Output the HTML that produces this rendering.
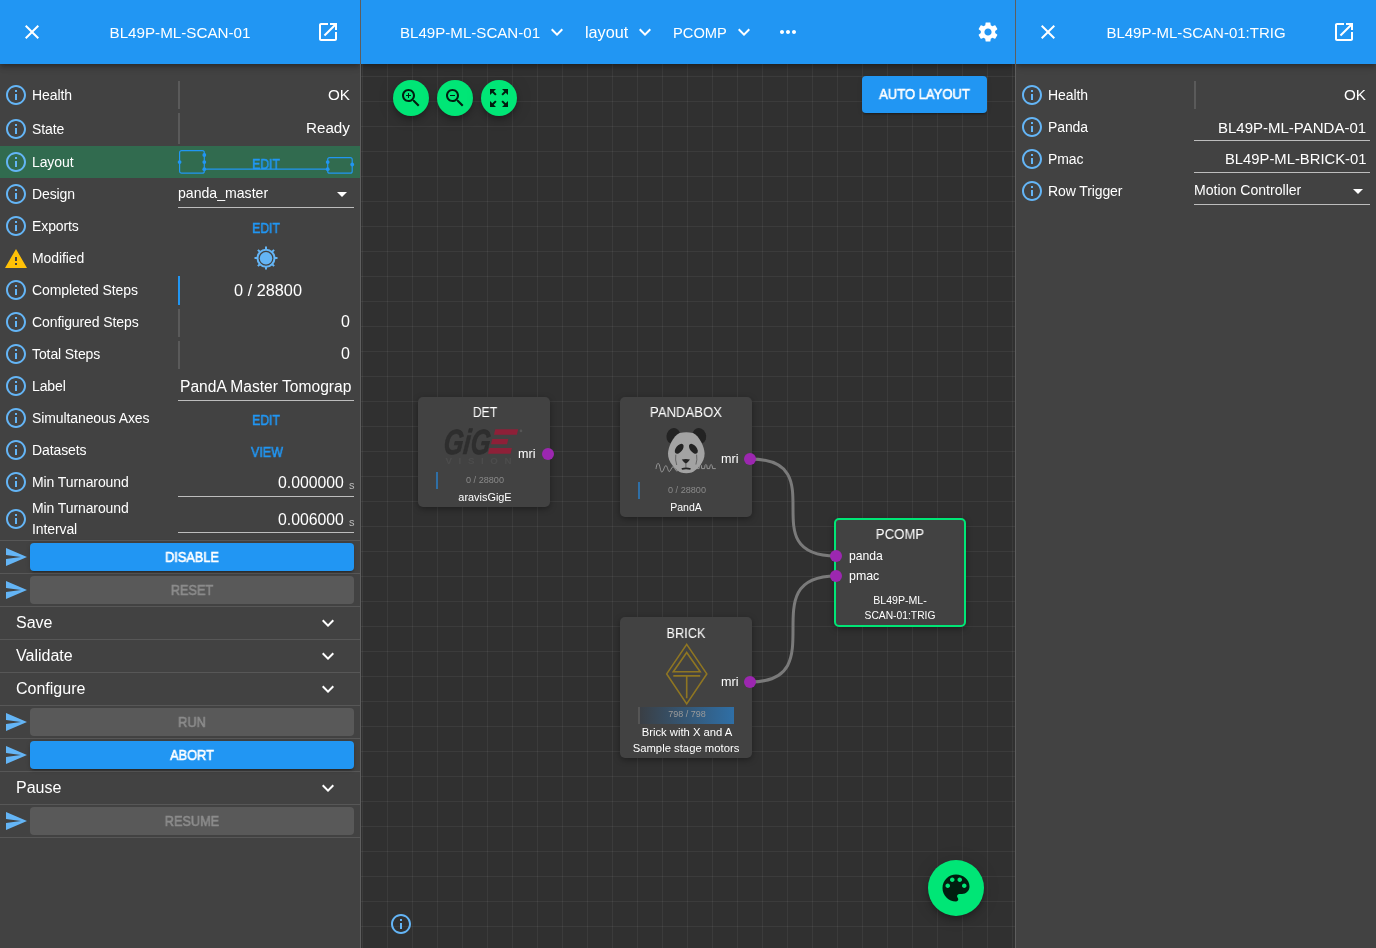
<!DOCTYPE html><html><head><meta charset="utf-8"><style>
*{box-sizing:border-box;margin:0;padding:0}
html,body{width:1376px;height:948px;overflow:hidden;background:#303030;font-family:"Liberation Sans",sans-serif;color:#fff}
.abs{position:absolute}
.t{position:absolute;white-space:nowrap;line-height:1;will-change:transform}
.shadow{box-shadow:0 2px 4px -1px rgba(0,0,0,.2),0 4px 5px 0 rgba(0,0,0,.14),0 1px 10px 0 rgba(0,0,0,.12);clip-path:inset(0 0 -20px 0)}
</style></head><body>
<div class="abs" style="left:0px;top:0px;width:360px;height:948px;background:#424242;"></div>
<div class="abs" style="left:1016px;top:0px;width:360px;height:948px;background:#424242;"></div>
<div class="abs" style="left:361px;top:0;width:654px;height:948px;background-color:#303030;background-image:linear-gradient(to right,rgba(255,255,255,.054) 1px,transparent 1px),linear-gradient(to bottom,rgba(255,255,255,.054) 1px,transparent 1px);background-size:25px 25px;background-position:1px 1px"></div>
<div class="abs" style="left:0px;top:146px;width:360px;height:32px;background:#316b4f;"></div>
<svg class="abs" style="left:4.00px;top:83.00px;" width="24" height="24" viewBox="0 0 24 24"><path fill="#64b5f6" d="M11 7h2v2h-2zm0 4h2v6h-2zm1-9C6.48 2 2 6.48 2 12s4.48 10 10 10 10-4.48 10-10S17.52 2 12 2zm0 18c-4.41 0-8-3.59-8-8s3.59-8 8-8 8 3.59 8 8-3.59 8-8 8z"/></svg>
<div class="t" style="top:88.15px;font-size:14px;color:#fff;letter-spacing:-0.1px;left:32px;">Health</div>
<svg class="abs" style="left:4.00px;top:116.50px;" width="24" height="24" viewBox="0 0 24 24"><path fill="#64b5f6" d="M11 7h2v2h-2zm0 4h2v6h-2zm1-9C6.48 2 2 6.48 2 12s4.48 10 10 10 10-4.48 10-10S17.52 2 12 2zm0 18c-4.41 0-8-3.59-8-8s3.59-8 8-8 8 3.59 8 8-3.59 8-8 8z"/></svg>
<div class="t" style="top:121.65px;font-size:14px;color:#fff;letter-spacing:-0.1px;left:32px;">State</div>
<svg class="abs" style="left:4.00px;top:150.00px;" width="24" height="24" viewBox="0 0 24 24"><path fill="#64b5f6" d="M11 7h2v2h-2zm0 4h2v6h-2zm1-9C6.48 2 2 6.48 2 12s4.48 10 10 10 10-4.48 10-10S17.52 2 12 2zm0 18c-4.41 0-8-3.59-8-8s3.59-8 8-8 8 3.59 8 8-3.59 8-8 8z"/></svg>
<div class="t" style="top:155.15px;font-size:14px;color:#fff;letter-spacing:-0.1px;left:32px;">Layout</div>
<svg class="abs" style="left:4.00px;top:182.00px;" width="24" height="24" viewBox="0 0 24 24"><path fill="#64b5f6" d="M11 7h2v2h-2zm0 4h2v6h-2zm1-9C6.48 2 2 6.48 2 12s4.48 10 10 10 10-4.48 10-10S17.52 2 12 2zm0 18c-4.41 0-8-3.59-8-8s3.59-8 8-8 8 3.59 8 8-3.59 8-8 8z"/></svg>
<div class="t" style="top:187.15px;font-size:14px;color:#fff;letter-spacing:-0.1px;left:32px;">Design</div>
<svg class="abs" style="left:4.00px;top:214.00px;" width="24" height="24" viewBox="0 0 24 24"><path fill="#64b5f6" d="M11 7h2v2h-2zm0 4h2v6h-2zm1-9C6.48 2 2 6.48 2 12s4.48 10 10 10 10-4.48 10-10S17.52 2 12 2zm0 18c-4.41 0-8-3.59-8-8s3.59-8 8-8 8 3.59 8 8-3.59 8-8 8z"/></svg>
<div class="t" style="top:219.15px;font-size:14px;color:#fff;letter-spacing:-0.1px;left:32px;">Exports</div>
<svg class="abs" style="left:4.00px;top:246.70px;" width="24" height="24" viewBox="0 0 24 24"><path fill="#ffc107" d="M1 21h22L12 2 1 21zm12-3h-2v-2h2v2zm0-4h-2v-4h2v4z"/></svg>
<div class="t" style="top:251.15px;font-size:14px;color:#fff;letter-spacing:-0.1px;left:32px;">Modified</div>
<svg class="abs" style="left:4.00px;top:278.00px;" width="24" height="24" viewBox="0 0 24 24"><path fill="#64b5f6" d="M11 7h2v2h-2zm0 4h2v6h-2zm1-9C6.48 2 2 6.48 2 12s4.48 10 10 10 10-4.48 10-10S17.52 2 12 2zm0 18c-4.41 0-8-3.59-8-8s3.59-8 8-8 8 3.59 8 8-3.59 8-8 8z"/></svg>
<div class="t" style="top:283.15px;font-size:14px;color:#fff;letter-spacing:-0.1px;left:32px;">Completed Steps</div>
<svg class="abs" style="left:4.00px;top:310.00px;" width="24" height="24" viewBox="0 0 24 24"><path fill="#64b5f6" d="M11 7h2v2h-2zm0 4h2v6h-2zm1-9C6.48 2 2 6.48 2 12s4.48 10 10 10 10-4.48 10-10S17.52 2 12 2zm0 18c-4.41 0-8-3.59-8-8s3.59-8 8-8 8 3.59 8 8-3.59 8-8 8z"/></svg>
<div class="t" style="top:315.15px;font-size:14px;color:#fff;letter-spacing:-0.1px;left:32px;">Configured Steps</div>
<svg class="abs" style="left:4.00px;top:342.00px;" width="24" height="24" viewBox="0 0 24 24"><path fill="#64b5f6" d="M11 7h2v2h-2zm0 4h2v6h-2zm1-9C6.48 2 2 6.48 2 12s4.48 10 10 10 10-4.48 10-10S17.52 2 12 2zm0 18c-4.41 0-8-3.59-8-8s3.59-8 8-8 8 3.59 8 8-3.59 8-8 8z"/></svg>
<div class="t" style="top:347.15px;font-size:14px;color:#fff;letter-spacing:-0.1px;left:32px;">Total Steps</div>
<svg class="abs" style="left:4.00px;top:374.00px;" width="24" height="24" viewBox="0 0 24 24"><path fill="#64b5f6" d="M11 7h2v2h-2zm0 4h2v6h-2zm1-9C6.48 2 2 6.48 2 12s4.48 10 10 10 10-4.48 10-10S17.52 2 12 2zm0 18c-4.41 0-8-3.59-8-8s3.59-8 8-8 8 3.59 8 8-3.59 8-8 8z"/></svg>
<div class="t" style="top:379.15px;font-size:14px;color:#fff;letter-spacing:-0.1px;left:32px;">Label</div>
<svg class="abs" style="left:4.00px;top:406.00px;" width="24" height="24" viewBox="0 0 24 24"><path fill="#64b5f6" d="M11 7h2v2h-2zm0 4h2v6h-2zm1-9C6.48 2 2 6.48 2 12s4.48 10 10 10 10-4.48 10-10S17.52 2 12 2zm0 18c-4.41 0-8-3.59-8-8s3.59-8 8-8 8 3.59 8 8-3.59 8-8 8z"/></svg>
<div class="t" style="top:411.15px;font-size:14px;color:#fff;letter-spacing:-0.1px;left:32px;">Simultaneous Axes</div>
<svg class="abs" style="left:4.00px;top:438.00px;" width="24" height="24" viewBox="0 0 24 24"><path fill="#64b5f6" d="M11 7h2v2h-2zm0 4h2v6h-2zm1-9C6.48 2 2 6.48 2 12s4.48 10 10 10 10-4.48 10-10S17.52 2 12 2zm0 18c-4.41 0-8-3.59-8-8s3.59-8 8-8 8 3.59 8 8-3.59 8-8 8z"/></svg>
<div class="t" style="top:443.15px;font-size:14px;color:#fff;letter-spacing:-0.1px;left:32px;">Datasets</div>
<svg class="abs" style="left:4.00px;top:470.00px;" width="24" height="24" viewBox="0 0 24 24"><path fill="#64b5f6" d="M11 7h2v2h-2zm0 4h2v6h-2zm1-9C6.48 2 2 6.48 2 12s4.48 10 10 10 10-4.48 10-10S17.52 2 12 2zm0 18c-4.41 0-8-3.59-8-8s3.59-8 8-8 8 3.59 8 8-3.59 8-8 8z"/></svg>
<div class="t" style="top:475.15px;font-size:14px;color:#fff;letter-spacing:-0.1px;left:32px;">Min Turnaround</div>
<svg class="abs" style="left:4.00px;top:507.30px;" width="24" height="24" viewBox="0 0 24 24"><path fill="#64b5f6" d="M11 7h2v2h-2zm0 4h2v6h-2zm1-9C6.48 2 2 6.48 2 12s4.48 10 10 10 10-4.48 10-10S17.52 2 12 2zm0 18c-4.41 0-8-3.59-8-8s3.59-8 8-8 8 3.59 8 8-3.59 8-8 8z"/></svg>
<div class="t" style="top:501.05px;font-size:14px;color:#fff;letter-spacing:-0.1px;left:32px;">Min Turnaround</div>
<div class="t" style="top:521.65px;font-size:14px;color:#fff;letter-spacing:-0.1px;left:32px;">Interval</div>
<div class="abs" style="left:178px;top:81px;width:2px;height:28px;background:#5a5a5a;"></div>
<div class="t" style="top:86.73px;font-size:15.2px;color:#fff;right:1026px;">OK</div>
<div class="abs" style="left:178px;top:113px;width:2px;height:31px;background:#5a5a5a;"></div>
<div class="t" style="top:119.93px;font-size:15.2px;color:#fff;right:1026px;">Ready</div>
<svg class="abs" style="left:176px;top:148px" width="182" height="30" viewBox="0 0 182 30">
<g fill="none" stroke="#2196f3" stroke-width="1.2">
<rect x="3.6" y="2.6" width="24.7" height="22.6" rx="2"/>
<rect x="151.7" y="9.6" width="24.5" height="15.6" rx="2"/>
<path d="M28.3 21.2H151.7"/>
</g>
<g fill="#2196f3">
<circle cx="3.6" cy="14.1" r="1.9"/><circle cx="28.3" cy="7" r="1.9"/><circle cx="28.3" cy="14.1" r="1.9"/><circle cx="28.3" cy="21.2" r="1.9"/>
<circle cx="151.7" cy="14.1" r="1.9"/><circle cx="151.7" cy="21.2" r="1.9"/><circle cx="176.2" cy="16.5" r="1.9"/>
</g></svg>
<div class="t" style="top:157.15px;font-size:14px;color:#2196f3;-webkit-text-stroke:0.6px currentColor;transform:scaleX(0.863);transform-origin:center 50%;left:65.80px;width:400px;text-align:center;">EDIT</div>
<div class="t" style="top:186.06px;font-size:14.1px;color:#fff;left:178px;">panda_master</div>
<svg class="abs" style="left:330.00px;top:182.00px;" width="24" height="24" viewBox="0 0 24 24"><path fill="#fff" d="M7 10l5 5 5-5z"/></svg>
<div class="abs" style="left:178px;top:207px;width:176px;height:1px;background:#bdbdbd;"></div>
<div class="t" style="top:220.55px;font-size:14px;color:#2196f3;-webkit-text-stroke:0.6px currentColor;transform:scaleX(0.863);transform-origin:center 50%;left:65.80px;width:400px;text-align:center;">EDIT</div>
<svg class="abs" style="left:254px;top:246px" width="24" height="24" viewBox="0 0 24 24">
<g fill="#64b5f6"><circle cx="12" cy="12.3" r="6.2"/></g>
<circle cx="12" cy="12.3" r="8.5" fill="none" stroke="#64b5f6" stroke-width="2"/>
<g stroke="#64b5f6" stroke-width="2">
<path d="M12 0.5V4M12 20V23.5M0.5 12H4M20 12H23.5M3.9 3.9L6.3 6.3M17.7 17.7L20.1 20.1M3.9 20.1L6.3 17.7M17.7 6.3L20.1 3.9"/>
</g></svg>
<div class="abs" style="left:178px;top:276px;width:2px;height:29px;background:#2196f3;"></div>
<div class="t" style="top:282.20px;font-size:16.3px;color:#fff;left:67.50px;width:400px;text-align:center;">0 / 28800</div>
<div class="abs" style="left:178px;top:309px;width:2px;height:28px;background:#5a5a5a;"></div>
<div class="t" style="top:313.96px;font-size:16px;color:#fff;right:1026px;">0</div>
<div class="abs" style="left:178px;top:341px;width:2px;height:28px;background:#5a5a5a;"></div>
<div class="t" style="top:345.96px;font-size:16px;color:#fff;right:1026px;">0</div>
<div class="t" style="top:378.79px;font-size:15.6px;color:#fff;left:180px;width:172px;overflow:hidden;">PandA Master Tomograp</div>
<div class="abs" style="left:178px;top:400px;width:176px;height:1px;background:#bdbdbd;"></div>
<div class="t" style="top:412.65px;font-size:14px;color:#2196f3;-webkit-text-stroke:0.6px currentColor;transform:scaleX(0.863);transform-origin:center 50%;left:65.80px;width:400px;text-align:center;">EDIT</div>
<div class="t" style="top:444.65px;font-size:14px;color:#2196f3;-webkit-text-stroke:0.6px currentColor;transform:scaleX(0.889);transform-origin:center 50%;left:66.60px;width:400px;text-align:center;">VIEW</div>
<div class="t" style="top:474.63px;font-size:15.8px;color:#fff;right:1032px;">0.000000</div>
<div class="t" style="top:479.69px;font-size:11px;color:#bdbdbd;right:1022px;">s</div>
<div class="abs" style="left:178px;top:496px;width:176px;height:1px;background:#bdbdbd;"></div>
<div class="t" style="top:511.63px;font-size:15.8px;color:#fff;right:1032px;">0.006000</div>
<div class="t" style="top:516.69px;font-size:11px;color:#bdbdbd;right:1022px;">s</div>
<div class="abs" style="left:178px;top:532px;width:176px;height:1px;background:#bdbdbd;"></div>
<div class="abs" style="left:0px;top:540px;width:360px;height:1px;background:#575757;"></div>
<div class="abs" style="left:0px;top:573px;width:360px;height:1px;background:#575757;"></div>
<div class="abs" style="left:0px;top:606px;width:360px;height:1px;background:#575757;"></div>
<div class="abs" style="left:0px;top:639px;width:360px;height:1px;background:#575757;"></div>
<div class="abs" style="left:0px;top:672px;width:360px;height:1px;background:#575757;"></div>
<div class="abs" style="left:0px;top:705px;width:360px;height:1px;background:#575757;"></div>
<div class="abs" style="left:0px;top:738px;width:360px;height:1px;background:#575757;"></div>
<div class="abs" style="left:0px;top:771px;width:360px;height:1px;background:#575757;"></div>
<div class="abs" style="left:0px;top:804px;width:360px;height:1px;background:#575757;"></div>
<div class="abs" style="left:0px;top:837px;width:360px;height:1px;background:#575757;"></div>
<svg class="abs" style="left:4.00px;top:545.00px;" width="24" height="24" viewBox="0 0 24 24"><path fill="#64b5f6" d="M2.01 21L23 12 2.01 3 2 10l15 2-15 2z"/></svg>
<div class="abs" style="left:30px;top:543px;width:324px;height:28px;border-radius:4px;background:#2196f3;box-shadow:0 3px 1px -2px rgba(0,0,0,.2),0 2px 2px 0 rgba(0,0,0,.14),0 1px 5px 0 rgba(0,0,0,.12)"></div>
<div class="t" style="top:550.15px;font-size:14px;color:#fff;-webkit-text-stroke:0.6px currentColor;transform:scaleX(0.91);transform-origin:center 50%;left:-8.00px;width:400px;text-align:center;">DISABLE</div>
<svg class="abs" style="left:4.00px;top:578.00px;" width="24" height="24" viewBox="0 0 24 24"><path fill="#64b5f6" d="M2.01 21L23 12 2.01 3 2 10l15 2-15 2z"/></svg>
<div class="abs" style="left:30px;top:576px;width:324px;height:28px;border-radius:4px;background:#595959"></div>
<div class="t" style="top:583.15px;font-size:14px;color:#8c8c8c;-webkit-text-stroke:0.6px currentColor;transform:scaleX(0.91);transform-origin:center 50%;left:-8.00px;width:400px;text-align:center;">RESET</div>
<div class="t" style="top:615.26px;font-size:16px;color:#fff;left:16px;">Save</div>
<svg class="abs" style="left:316.00px;top:611.00px;" width="24" height="24" viewBox="0 0 24 24"><path fill="#fff" d="M16.59 8.59L12 13.17 7.41 8.59 6 10l6 6 6-6z"/></svg>
<div class="t" style="top:648.26px;font-size:16px;color:#fff;left:16px;">Validate</div>
<svg class="abs" style="left:316.00px;top:644.00px;" width="24" height="24" viewBox="0 0 24 24"><path fill="#fff" d="M16.59 8.59L12 13.17 7.41 8.59 6 10l6 6 6-6z"/></svg>
<div class="t" style="top:681.26px;font-size:16px;color:#fff;left:16px;">Configure</div>
<svg class="abs" style="left:316.00px;top:677.00px;" width="24" height="24" viewBox="0 0 24 24"><path fill="#fff" d="M16.59 8.59L12 13.17 7.41 8.59 6 10l6 6 6-6z"/></svg>
<svg class="abs" style="left:4.00px;top:710.00px;" width="24" height="24" viewBox="0 0 24 24"><path fill="#64b5f6" d="M2.01 21L23 12 2.01 3 2 10l15 2-15 2z"/></svg>
<div class="abs" style="left:30px;top:708px;width:324px;height:28px;border-radius:4px;background:#595959"></div>
<div class="t" style="top:715.15px;font-size:14px;color:#8c8c8c;-webkit-text-stroke:0.6px currentColor;transform:scaleX(0.91);transform-origin:center 50%;left:-8.00px;width:400px;text-align:center;">RUN</div>
<svg class="abs" style="left:4.00px;top:743.00px;" width="24" height="24" viewBox="0 0 24 24"><path fill="#64b5f6" d="M2.01 21L23 12 2.01 3 2 10l15 2-15 2z"/></svg>
<div class="abs" style="left:30px;top:741px;width:324px;height:28px;border-radius:4px;background:#2196f3;box-shadow:0 3px 1px -2px rgba(0,0,0,.2),0 2px 2px 0 rgba(0,0,0,.14),0 1px 5px 0 rgba(0,0,0,.12)"></div>
<div class="t" style="top:748.15px;font-size:14px;color:#fff;-webkit-text-stroke:0.6px currentColor;transform:scaleX(0.91);transform-origin:center 50%;left:-8.00px;width:400px;text-align:center;">ABORT</div>
<div class="t" style="top:780.26px;font-size:16px;color:#fff;left:16px;">Pause</div>
<svg class="abs" style="left:316.00px;top:776.00px;" width="24" height="24" viewBox="0 0 24 24"><path fill="#fff" d="M16.59 8.59L12 13.17 7.41 8.59 6 10l6 6 6-6z"/></svg>
<svg class="abs" style="left:4.00px;top:809.00px;" width="24" height="24" viewBox="0 0 24 24"><path fill="#64b5f6" d="M2.01 21L23 12 2.01 3 2 10l15 2-15 2z"/></svg>
<div class="abs" style="left:30px;top:807px;width:324px;height:28px;border-radius:4px;background:#595959"></div>
<div class="t" style="top:814.15px;font-size:14px;color:#8c8c8c;-webkit-text-stroke:0.6px currentColor;transform:scaleX(0.91);transform-origin:center 50%;left:-8.00px;width:400px;text-align:center;">RESUME</div>
<div class="abs shadow" style="left:0;top:0;width:360px;height:64px;background:#2196f3"></div>
<svg class="abs" style="left:20.00px;top:20.00px;" width="24" height="24" viewBox="0 0 24 24"><path fill="#fff" d="M19 6.41L17.59 5 12 10.59 6.41 5 5 6.41 10.59 12 5 17.59 6.41 19 12 13.41 17.59 19 19 17.59 13.41 12z"/></svg>
<div class="t" style="top:25.13px;font-size:15.2px;color:#fff;left:-20.00px;width:400px;text-align:center;">BL49P-ML-SCAN-01</div>
<svg class="abs" style="left:316.00px;top:20.00px;" width="24" height="24" viewBox="0 0 24 24"><path fill="#fff" d="M19 19H5V5h7V3H5c-1.11 0-2 .9-2 2v14c0 1.1.89 2 2 2h14c1.1 0 2-.9 2-2v-7h-2v7zM14 3v2h3.59l-9.83 9.83 1.41 1.41L19 6.41V10h2V3h-7z"/></svg>
<svg class="abs" style="left:0;top:0" width="1376" height="948">
<g fill="none" stroke="#7a7a7a" stroke-width="3">
<path d="M750 459C836 459 750 556 836 556"/>
<path d="M750 682C836 682 750 576 836 576"/>
</g></svg>
<div class="abs" style="left:418px;top:397px;width:132px;height:110px;background:#424242;border-radius:5px;box-shadow:0 2px 6px rgba(0,0,0,.35)"></div>
<div class="t" style="top:405.15px;font-size:14px;color:#fff;transform:scaleX(0.87);transform-origin:center 50%;left:424.80px;width:120px;text-align:center;">DET</div>
<svg class="abs" style="left:440px;top:424px" width="90" height="44" viewBox="0 0 90 44">
<text x="6" y="29.8" transform="skewX(-6)" font-family="Liberation Sans" font-weight="bold" font-style="italic" font-size="35" fill="#2e2e2e" stroke="#2e2e2e" stroke-width="0.7" textLength="46.5" lengthAdjust="spacingAndGlyphs">GiG</text>
<g fill="#8e2038">
<polygon points="55.3,5.2 78.2,5.2 76.8,10.8 54,10.8"/>
<polygon points="52.3,15 68.3,15 67,20.3 51,20.3"/>
<polygon points="49.4,24.1 71.9,24.1 70.6,29.8 48.1,29.8"/>
</g>
<text x="5.5" y="39.9" font-family="Liberation Sans" font-size="9.8" font-weight="bold" fill="#4c4c4c" textLength="66" lengthAdjust="spacing">VISION</text>
<circle cx="81" cy="6.9" r="1.3" fill="#555"/>
</svg>
<div class="t" style="top:448.13px;font-size:12.6px;color:#fff;left:518px;">mri</div>
<div class="abs" style="left:542px;top:448px;width:12px;height:12px;border-radius:50%;background:#9c27b0"></div>
<div class="abs" style="left:436px;top:472px;width:2px;height:17px;background:#2f6fa6;"></div>
<div class="t" style="top:476.10px;font-size:9.1px;color:#8a8a8a;left:434.90px;width:100px;text-align:center;">0 / 28800</div>
<div class="t" style="top:492.27px;font-size:10.9px;color:#fff;left:424.80px;width:120px;text-align:center;">aravisGigE</div>
<div class="abs" style="left:620px;top:397px;width:132px;height:120px;background:#424242;border-radius:5px;box-shadow:0 2px 6px rgba(0,0,0,.35)"></div>
<div class="t" style="top:405.15px;font-size:14px;color:#fff;transform:scaleX(0.936);transform-origin:center 50%;left:621.40px;width:130px;text-align:center;">PANDABOX</div>
<svg class="abs" style="left:650px;top:425px" width="72" height="52" viewBox="0 0 72 52">
<ellipse cx="23.2" cy="10.8" rx="6.6" ry="8" transform="rotate(22 23.2 10.8)" fill="#232323"/>
<ellipse cx="49.4" cy="10.8" rx="6.6" ry="8" transform="rotate(-22 49.4 10.8)" fill="#232323"/>
<path d="M29.6 7.9Q36.3 6.8 43 7.9C49.5 11 54.5 22 54.6 28.5C54.7 37 47.5 44.5 41.7 47.5Q36.3 49 30.9 47.5C25 44.5 17.9 37 18 28.5C18.1 22 23 11 29.6 7.9Z" fill="#a3a3a3"/>
<ellipse cx="29.2" cy="23.8" rx="3.3" ry="5.8" transform="rotate(38 29.2 23.8)" fill="#232323"/>
<ellipse cx="43.4" cy="23.8" rx="3.3" ry="5.8" transform="rotate(-38 43.4 23.8)" fill="#232323"/>
<path d="M31.8 34.6Q35.9 33.6 40 34.6Q38 37.5 35.9 38.7Q33.8 37.5 31.8 34.6Z" fill="#232323"/>
<path d="M31.5 43.2Q35.9 42 40.8 43.2L40.3 44.7Q35.9 43.9 32 44.7Z" fill="#232323"/>
<path d="M25.8 29.6Q25 35 26.7 40M46.6 29.6Q47.4 35 45.9 39.5M35.9 38.7V42.8" stroke="#3a3a3a" stroke-width="0.6" fill="none"/>
<path d="M6 43.9C6.8 39 7.4 38.4 8.2 38.4C9.8 38.4 10.4 47.1 11.8 47.1C13.4 47.1 14.4 40.6 15.9 40.6C17.3 40.6 18 46.6 19.2 46.6C20.6 46.6 21.6 41.7 23 41.7C24.6 41.7 25.4 46 26.9 46C28 46 28.8 44 29.6 43.3M41.7 43.6H49.1Q49.3 39.5 50.4 39.5Q51.5 39.5 51.7 43.6H54.6Q54.8 39.5 55.9 39.5Q57 39.5 57.2 43.6H59.6Q59.8 39.5 61.1 39.5Q62.4 39.5 62.6 43.6H65.8" stroke="#a3a3a3" stroke-width="0.85" fill="none"/>
</svg>
<div class="t" style="top:453.33px;font-size:12.6px;color:#fff;left:720.5px;">mri</div>
<div class="abs" style="left:744px;top:453px;width:12px;height:12px;border-radius:50%;background:#9c27b0"></div>
<div class="abs" style="left:638px;top:482px;width:2px;height:17px;background:#2f6fa6;"></div>
<div class="t" style="top:486.20px;font-size:9.1px;color:#8a8a8a;left:637.00px;width:100px;text-align:center;">0 / 28800</div>
<div class="t" style="top:502.11px;font-size:10.5px;color:#fff;left:636.20px;width:100px;text-align:center;">PandA</div>
<div class="abs" style="left:834px;top:518px;width:132px;height:109px;background:#424242;border-radius:5px;border:2px solid #00e676;box-shadow:0 2px 6px rgba(0,0,0,.35)"></div>
<div class="t" style="top:526.85px;font-size:14px;color:#fff;transform:scaleX(0.94);transform-origin:center 50%;left:840.30px;width:120px;text-align:center;">PCOMP</div>
<div class="abs" style="left:830px;top:550px;width:12px;height:12px;border-radius:50%;background:#9c27b0"></div>
<div class="t" style="top:550.37px;font-size:12.2px;color:#fff;left:848.5px;">panda</div>
<div class="abs" style="left:830px;top:570px;width:12px;height:12px;border-radius:50%;background:#9c27b0"></div>
<div class="t" style="top:570.00px;font-size:12.4px;color:#fff;left:848.5px;">pmac</div>
<div class="t" style="top:594.83px;font-size:10.6px;color:#fff;left:840.30px;width:120px;text-align:center;">BL49P-ML-</div>
<div class="t" style="top:610.98px;font-size:10.3px;color:#fff;left:839.70px;width:120px;text-align:center;">SCAN-01:TRIG</div>
<div class="abs" style="left:620px;top:617px;width:132px;height:141px;background:#424242;border-radius:5px;box-shadow:0 2px 6px rgba(0,0,0,.35)"></div>
<div class="t" style="top:625.95px;font-size:14px;color:#fff;transform:scaleX(0.91);transform-origin:center 50%;left:626.00px;width:120px;text-align:center;">BRICK</div>
<svg class="abs" style="left:660px;top:640px" width="54" height="68" viewBox="0 0 54 68">
<g fill="none" stroke="#8f7622" stroke-width="1.6">
<path d="M26.7 4.4L46.8 33.9L26.7 63.9L6.7 33.9Z"/>
<path d="M26.7 12.5L40.2 31.8H13.3Z"/>
<path d="M13.3 35.9H40.2M26.7 35.9V58.2"/>
</g></svg>
<div class="t" style="top:676.13px;font-size:12.6px;color:#fff;left:720.7px;">mri</div>
<div class="abs" style="left:744px;top:676px;width:12px;height:12px;border-radius:50%;background:#9c27b0"></div>
<div class="abs" style="left:638px;top:707px;width:96px;height:17px;background:linear-gradient(to right,#3a3f45,#2f6fa6);border-left:2px solid #555"></div>
<div class="t" style="top:710.28px;font-size:9.0px;color:#9a9a9a;left:637.20px;width:100px;text-align:center;">798 / 798</div>
<div class="t" style="top:727.08px;font-size:11.25px;color:#fff;left:621.80px;width:130px;text-align:center;">Brick with X and A</div>
<div class="t" style="top:743.23px;font-size:11.3px;color:#fff;left:620.50px;width:130px;text-align:center;">Sample stage motors</div>
<div class="abs" style="left:393.0px;top:79.8px;width:36px;height:36px;border-radius:50%;background:#00e676;box-shadow:0 3px 5px -1px rgba(0,0,0,.2),0 6px 10px 0 rgba(0,0,0,.14),0 1px 18px 0 rgba(0,0,0,.12)"></div>
<svg class="abs" style="left:399.00px;top:85.80px;" width="24" height="24" viewBox="0 0 24 24"><path fill="rgba(0,0,0,.87)" d="M15.5 14h-.79l-.28-.27C15.41 12.59 16 11.11 16 9.5 16 5.91 13.09 3 9.5 3S3 5.91 3 9.5 5.91 16 9.5 16c1.61 0 3.09-.59 4.23-1.57l.27.28v.79l5 4.99L20.49 19l-4.99-5zm-6 0C7.01 14 5 11.99 5 9.5S7.01 5 9.5 5 14 7.01 14 9.5 11.99 14 9.5 14zm2.5-4h-2v2H9v-2H7V9h2V7h1v2h2v1z"/></svg>
<div class="abs" style="left:437.0px;top:79.8px;width:36px;height:36px;border-radius:50%;background:#00e676;box-shadow:0 3px 5px -1px rgba(0,0,0,.2),0 6px 10px 0 rgba(0,0,0,.14),0 1px 18px 0 rgba(0,0,0,.12)"></div>
<svg class="abs" style="left:443.00px;top:85.80px;" width="24" height="24" viewBox="0 0 24 24"><path fill="rgba(0,0,0,.87)" d="M15.5 14h-.79l-.28-.27C15.41 12.59 16 11.11 16 9.5 16 5.91 13.09 3 9.5 3S3 5.91 3 9.5 5.91 16 9.5 16c1.61 0 3.09-.59 4.23-1.57l.27.28v.79l5 4.99L20.49 19l-4.99-5zm-6 0C7.01 14 5 11.99 5 9.5S7.01 5 9.5 5 14 7.01 14 9.5 11.99 14 9.5 14zM7 9h5v1H7z"/></svg>
<div class="abs" style="left:481.0px;top:79.8px;width:36px;height:36px;border-radius:50%;background:#00e676;box-shadow:0 3px 5px -1px rgba(0,0,0,.2),0 6px 10px 0 rgba(0,0,0,.14),0 1px 18px 0 rgba(0,0,0,.12)"></div>
<svg class="abs" style="left:487.00px;top:85.80px;" width="24" height="24" viewBox="0 0 24 24"><path fill="rgba(0,0,0,.87)" d="M15 3l2.3 2.3-2.89 2.87 1.42 1.42L18.7 6.7 21 9V3zM3 9l2.3-2.3 2.87 2.89 1.42-1.42L6.7 5.3 9 3H3zm6 12l-2.3-2.3 2.89-2.87-1.42-1.42L5.3 17.3 3 15v6zm12-6l-2.3 2.3-2.87-2.89-1.42 1.42 2.89 2.87L15 21h6z"/></svg>
<div class="abs" style="left:862px;top:76px;width:125px;height:37px;border-radius:4px;background:#2196f3;box-shadow:0 3px 1px -2px rgba(0,0,0,.2),0 2px 2px 0 rgba(0,0,0,.14),0 1px 5px 0 rgba(0,0,0,.12)"></div>
<div class="t" style="top:87.15px;font-size:14px;color:#fff;-webkit-text-stroke:0.6px currentColor;transform:scaleX(0.93);transform-origin:center 50%;left:861.50px;width:125px;text-align:center;">AUTO LAYOUT</div>
<div class="abs" style="left:928.0px;top:860.0px;width:56px;height:56px;border-radius:50%;background:#00e676;box-shadow:0 3px 5px -1px rgba(0,0,0,.2),0 6px 10px 0 rgba(0,0,0,.14),0 1px 18px 0 rgba(0,0,0,.12)"></div>
<svg class="abs" style="left:938.00px;top:870.00px;" width="36" height="36" viewBox="0 0 24 24"><path fill="rgba(0,0,0,.87)" d="M12 3c-4.97 0-9 4.03-9 9s4.03 9 9 9c.83 0 1.5-.67 1.5-1.5 0-.39-.15-.74-.39-1.01-.23-.26-.38-.61-.38-.99 0-.83.67-1.5 1.5-1.5H16c2.76 0 5-2.24 5-5 0-4.42-4.03-8-9-8zm-5.5 9c-.83 0-1.5-.67-1.5-1.5S5.67 9 6.5 9 8 9.67 8 10.5 7.33 12 6.5 12zm3-4C8.67 8 8 7.33 8 6.5S8.67 5 9.5 5s1.5.67 1.5 1.5S10.33 8 9.5 8zm5 0c-.83 0-1.5-.67-1.5-1.5S13.67 5 14.5 5s1.5.67 1.5 1.5S15.33 8 14.5 8zm3 4c-.83 0-1.5-.67-1.5-1.5S16.67 9 17.5 9s1.5.67 1.5 1.5-.67 1.5-1.5 1.5z"/></svg>
<svg class="abs" style="left:389.00px;top:912.00px;" width="24" height="24" viewBox="0 0 24 24"><path fill="#64b5f6" d="M11 7h2v2h-2zm0 4h2v6h-2zm1-9C6.48 2 2 6.48 2 12s4.48 10 10 10 10-4.48 10-10S17.52 2 12 2zm0 18c-4.41 0-8-3.59-8-8s3.59-8 8-8 8 3.59 8 8-3.59 8-8 8z"/></svg>
<div class="abs shadow" style="left:361px;top:0;width:654px;height:64px;background:#2196f3"></div>
<div class="t" style="top:25.22px;font-size:15.1px;color:#fff;left:400px;">BL49P-ML-SCAN-01</div>
<svg class="abs" style="left:545.30px;top:19.70px;" width="24" height="24" viewBox="0 0 24 24"><path fill="#fff" d="M16.59 8.59L12 13.17 7.41 8.59 6 10l6 6 6-6z"/></svg>
<div class="t" style="top:24.29px;font-size:16.2px;color:#fff;left:585px;">layout</div>
<svg class="abs" style="left:633.40px;top:19.70px;" width="24" height="24" viewBox="0 0 24 24"><path fill="#fff" d="M16.59 8.59L12 13.17 7.41 8.59 6 10l6 6 6-6z"/></svg>
<div class="t" style="top:25.56px;font-size:14.7px;color:#fff;left:673px;">PCOMP</div>
<svg class="abs" style="left:732.20px;top:19.70px;" width="24" height="24" viewBox="0 0 24 24"><path fill="#fff" d="M16.59 8.59L12 13.17 7.41 8.59 6 10l6 6 6-6z"/></svg>
<svg class="abs" style="left:776.00px;top:20.00px;" width="24" height="24" viewBox="0 0 24 24"><path fill="#fff" d="M6 10c-1.1 0-2 .9-2 2s.9 2 2 2 2-.9 2-2-.9-2-2-2zm12 0c-1.1 0-2 .9-2 2s.9 2 2 2 2-.9 2-2-.9-2-2-2zm-6 0c-1.1 0-2 .9-2 2s.9 2 2 2 2-.9 2-2-.9-2-2-2z"/></svg>
<svg class="abs" style="left:976.00px;top:20.00px;" width="24" height="24" viewBox="0 0 24 24"><path fill="#fff" d="M19.14 12.94c.04-.3.06-.61.06-.94 0-.32-.02-.64-.07-.94l2.03-1.58c.18-.14.23-.41.12-.61l-1.92-3.32c-.12-.22-.37-.29-.59-.22l-2.39.96c-.5-.38-1.03-.7-1.62-.94l-.36-2.54c-.04-.24-.24-.41-.48-.41h-3.84c-.24 0-.43.17-.47.41l-.36 2.54c-.59.24-1.13.57-1.62.94l-2.39-.96c-.22-.08-.47 0-.59.22L2.74 8.87c-.12.21-.08.47.12.61l2.03 1.58c-.05.3-.09.63-.09.94s.02.64.07.94l-2.03 1.58c-.18.14-.23.41-.12.61l1.92 3.32c.12.22.37.29.59.22l2.39-.96c.5.38 1.03.7 1.62.94l.36 2.54c.05.24.24.41.48.41h3.84c.24 0 .44-.17.47-.41l.36-2.54c.59-.24 1.13-.56 1.62-.94l2.39.96c.22.08.47 0 .59-.22l1.92-3.32c.12-.22.07-.47-.12-.61l-2.01-1.58zM12 15.6c-1.98 0-3.6-1.62-3.6-3.6s1.62-3.6 3.6-3.6 3.6 1.62 3.6 3.6-1.62 3.6-3.6 3.6z"/></svg>
<svg class="abs" style="left:1020.00px;top:83.00px;" width="24" height="24" viewBox="0 0 24 24"><path fill="#64b5f6" d="M11 7h2v2h-2zm0 4h2v6h-2zm1-9C6.48 2 2 6.48 2 12s4.48 10 10 10 10-4.48 10-10S17.52 2 12 2zm0 18c-4.41 0-8-3.59-8-8s3.59-8 8-8 8 3.59 8 8-3.59 8-8 8z"/></svg>
<div class="t" style="top:88.15px;font-size:14px;color:#fff;letter-spacing:-0.1px;left:1048px;">Health</div>
<svg class="abs" style="left:1020.00px;top:115.00px;" width="24" height="24" viewBox="0 0 24 24"><path fill="#64b5f6" d="M11 7h2v2h-2zm0 4h2v6h-2zm1-9C6.48 2 2 6.48 2 12s4.48 10 10 10 10-4.48 10-10S17.52 2 12 2zm0 18c-4.41 0-8-3.59-8-8s3.59-8 8-8 8 3.59 8 8-3.59 8-8 8z"/></svg>
<div class="t" style="top:120.15px;font-size:14px;color:#fff;letter-spacing:-0.1px;left:1048px;">Panda</div>
<svg class="abs" style="left:1020.00px;top:147.00px;" width="24" height="24" viewBox="0 0 24 24"><path fill="#64b5f6" d="M11 7h2v2h-2zm0 4h2v6h-2zm1-9C6.48 2 2 6.48 2 12s4.48 10 10 10 10-4.48 10-10S17.52 2 12 2zm0 18c-4.41 0-8-3.59-8-8s3.59-8 8-8 8 3.59 8 8-3.59 8-8 8z"/></svg>
<div class="t" style="top:152.15px;font-size:14px;color:#fff;letter-spacing:-0.1px;left:1048px;">Pmac</div>
<svg class="abs" style="left:1020.00px;top:179.00px;" width="24" height="24" viewBox="0 0 24 24"><path fill="#64b5f6" d="M11 7h2v2h-2zm0 4h2v6h-2zm1-9C6.48 2 2 6.48 2 12s4.48 10 10 10 10-4.48 10-10S17.52 2 12 2zm0 18c-4.41 0-8-3.59-8-8s3.59-8 8-8 8 3.59 8 8-3.59 8-8 8z"/></svg>
<div class="t" style="top:184.15px;font-size:14px;color:#fff;letter-spacing:-0.1px;left:1048px;">Row Trigger</div>
<div class="abs" style="left:1194px;top:81px;width:2px;height:28px;background:#5a5a5a;"></div>
<div class="t" style="top:86.73px;font-size:15.2px;color:#fff;right:10px;">OK</div>
<div class="t" style="top:119.70px;font-size:15.0px;color:#fff;right:10px;">BL49P-ML-PANDA-01</div>
<div class="abs" style="left:1194px;top:140px;width:176px;height:1px;background:#bdbdbd;"></div>
<div class="t" style="top:151.97px;font-size:14.8px;color:#fff;right:10px;">BL49P-ML-BRICK-01</div>
<div class="abs" style="left:1194px;top:172px;width:176px;height:1px;background:#bdbdbd;"></div>
<div class="t" style="top:183.36px;font-size:14.1px;color:#fff;left:1194px;">Motion Controller</div>
<svg class="abs" style="left:1346.00px;top:179.00px;" width="24" height="24" viewBox="0 0 24 24"><path fill="#fff" d="M7 10l5 5 5-5z"/></svg>
<div class="abs" style="left:1194px;top:204px;width:176px;height:1px;background:#bdbdbd;"></div>
<div class="abs shadow" style="left:1016px;top:0;width:360px;height:64px;background:#2196f3"></div>
<svg class="abs" style="left:1036.00px;top:20.00px;" width="24" height="24" viewBox="0 0 24 24"><path fill="#fff" d="M19 6.41L17.59 5 12 10.59 6.41 5 5 6.41 10.59 12 5 17.59 6.41 19 12 13.41 17.59 19 19 17.59 13.41 12z"/></svg>
<div class="t" style="top:25.30px;font-size:15px;color:#fff;left:996.00px;width:400px;text-align:center;">BL49P-ML-SCAN-01:TRIG</div>
<svg class="abs" style="left:1332.00px;top:20.00px;" width="24" height="24" viewBox="0 0 24 24"><path fill="#fff" d="M19 19H5V5h7V3H5c-1.11 0-2 .9-2 2v14c0 1.1.89 2 2 2h14c1.1 0 2-.9 2-2v-7h-2v7zM14 3v2h3.59l-9.83 9.83 1.41 1.41L19 6.41V10h2V3h-7z"/></svg>
<div class="abs" style="left:360px;top:0px;width:1px;height:948px;background:#5e5e5e;z-index:10;"></div>
<div class="abs" style="left:1015px;top:0px;width:1px;height:948px;background:#5e5e5e;z-index:10;"></div>
</body></html>
